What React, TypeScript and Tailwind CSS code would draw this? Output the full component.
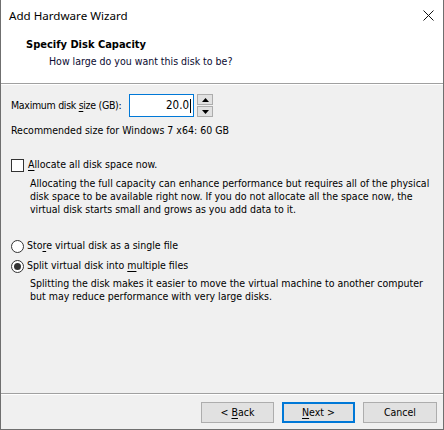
import React from "react";

const dlg = { fontFamily: '"DejaVu Sans Condensed", "Liberation Sans", Arial, sans-serif' };

function U({ children }: { children: React.ReactNode }) {
  return <span className="underline underline-offset-[2px] decoration-[1px]">{children}</span>;
}

export default function App() {
  return (
    <div
      className="w-[444px] h-[430px] box-border border-l border-r border-b border-[#6f6f6f] bg-[#f0f0f0] flex flex-col text-[10.5px] text-black overflow-hidden whitespace-nowrap"
      style={dlg}
    >
      {/* title bar */}
      <div className="h-[31px] bg-white flex items-center justify-between pl-[8px] pr-[9px]">
        <span className="text-[11.6px] text-black" style={{ fontFamily: '"Noto Sans", "Liberation Sans", sans-serif' }}>
          Add Hardware Wizard
        </span>
        <svg width="11" height="11" viewBox="0 0 11 11" className="mb-[1px]">
          <path d="M0.5 0.5 L10.5 10.5 M10.5 0.5 L0.5 10.5" stroke="#111" strokeWidth="1" />
        </svg>
      </div>
      {/* header */}
      <div className="h-[53px] bg-white border-b border-[#a0a0a0] flex flex-col pl-[25px] pt-[7px]">
        <div className="font-bold text-[11px] leading-[14px]">Specify Disk Capacity</div>
        <div className="pl-[23px] mt-[2px] leading-[14px] text-[#0a0a30]">How large do you want this disk to be?</div>
      </div>
      <div className="h-px bg-white" />
      {/* body */}
      <div className="flex-1 flex flex-col pl-[10px] pr-[10px]">
        <div className="flex items-center mt-[9px] h-[23px]">
          <span className="w-[118px] tracking-[-0.3px]">
            Maximum disk <U>s</U>ize (GB):
          </span>
          <div className="w-[65px] h-[23px] box-border border border-[#0078d7] bg-white flex items-center justify-end pr-[2px]">
            <span className="text-[11.5px]">20.0</span>
            <span className="w-px h-[14px] bg-black ml-[1px]" />
          </div>
          <div className="flex flex-col ml-[3px] gap-[1px]">
            <div className="w-[16px] h-[11px] box-border border border-[#adadad] bg-[#e1e1e1] flex items-center justify-center">
              <svg width="7" height="4" viewBox="0 0 7 4"><path d="M3.5 0 L7 4 L0 4 Z" fill="#000" /></svg>
            </div>
            <div className="w-[16px] h-[11px] box-border border border-[#adadad] bg-[#e1e1e1] flex items-center justify-center">
              <svg width="7" height="4" viewBox="0 0 7 4"><path d="M0 0 L7 0 L3.5 4 Z" fill="#000" /></svg>
            </div>
          </div>
        </div>
        <div className="mt-[7px] leading-[13px]">Recommended size for Windows 7 x64: 60 GB</div>

        <div className="flex items-center mt-[21px] h-[14px]">
          <div className="w-[13px] h-[13px] box-border border border-[#333] bg-white" />
          <span className="ml-[4px]">
            <U>A</U>llocate all disk space now.
          </span>
        </div>
        <div className="pl-[19px] mt-[5px] leading-[13px]">
          Allocating the full capacity can enhance performance but requires all of the physical
          <br />
          disk space to be available right now. If you do not allocate all the space now, the
          <br />
          virtual disk starts small and grows as you add data to it.
        </div>

        <div className="flex items-center mt-[23px] h-[14px]">
          <div className="w-[13px] h-[13px] box-border border border-[#333] rounded-full bg-white" />
          <span className="ml-[3px]">
            Sto<U>r</U>e virtual disk as a single file
          </span>
        </div>
        <div className="flex items-center mt-[6px] h-[14px]">
          <div className="w-[13px] h-[13px] box-border border border-[#333] rounded-full bg-white flex items-center justify-center">
            <div className="w-[7px] h-[7px] rounded-full bg-[#333]" />
          </div>
          <span className="ml-[3px]">
            Split virtual disk into <U>m</U>ultiple files
          </span>
        </div>
        <div className="pl-[19px] mt-[4px] leading-[13px]">
          Splitting the disk makes it easier to move the virtual machine to another computer
          <br />
          but may reduce performance with very large disks.
        </div>
      </div>
      {/* footer */}
      <div className="h-px bg-[#a0a0a0]" />
      <div className="h-px bg-white" />
      <div className="h-[34px] flex justify-end items-start pt-[7px] pr-[6px] gap-[8px]">
        <button className="w-[73px] h-[21px] box-border border border-[#adadad] bg-[#e1e1e1] text-[10.5px] text-black" style={dlg}>
          &lt; <U>B</U>ack
        </button>
        <button className="w-[73px] h-[21px] box-border border-2 border-[#0078d7] bg-[#e1e1e1] text-[10.5px] text-black" style={dlg}>
          <U>N</U>ext &gt;
        </button>
        <button className="w-[74px] h-[21px] box-border border border-[#adadad] bg-[#e1e1e1] text-[10.5px] text-black" style={dlg}>
          Cancel
        </button>
      </div>
    </div>
  );
}
